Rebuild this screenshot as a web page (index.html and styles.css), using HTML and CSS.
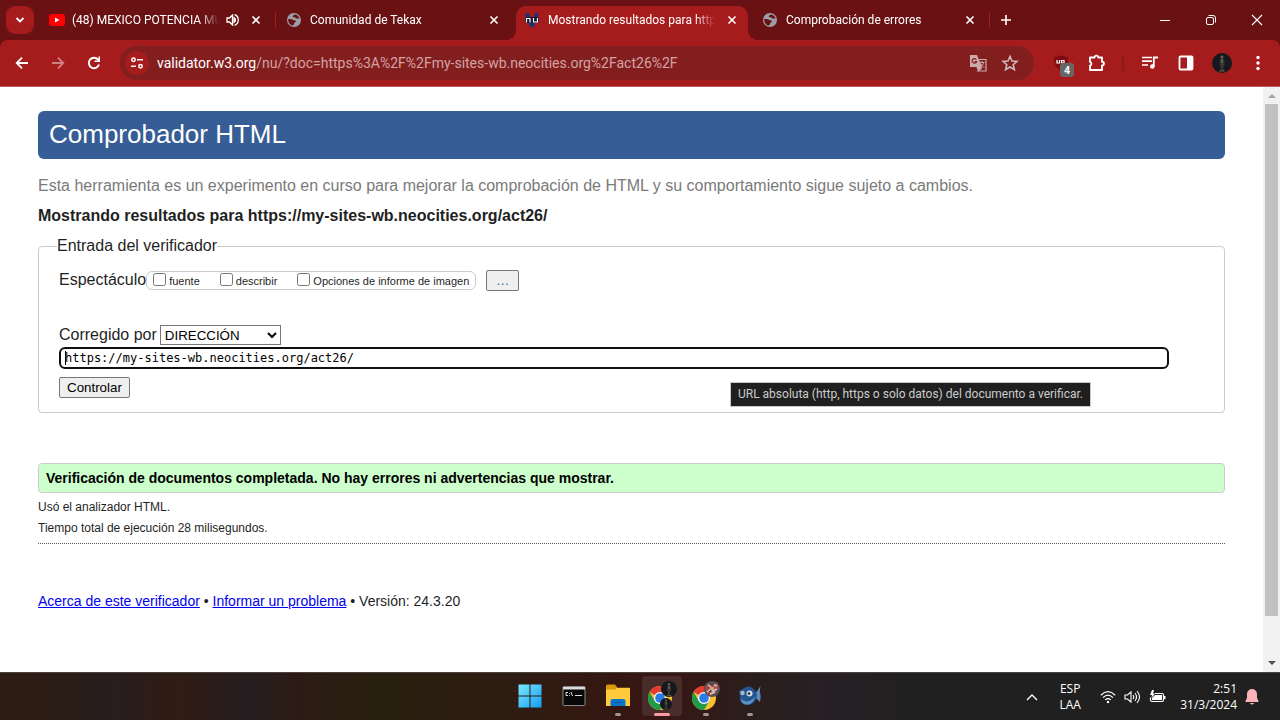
FILE: index.html
```html
<!DOCTYPE html>
<html lang="es">
<head>
<meta charset="utf-8">
<title>Mostrando resultados para https://my-sites-wb.neocities.org/act26/</title>
<link rel="stylesheet" href="styles.css">
</head>
<body>
<svg class="defs" width="0" height="0" aria-hidden="true">
  <defs>
    <symbol id="close" viewBox="0 0 10 10"><path d="M1.5 1.5l7 7M8.5 1.5l-7 7" fill="none" stroke="currentColor" stroke-width="1.6"/></symbol>
    <symbol id="globe" viewBox="0 0 14 14"><circle cx="7" cy="7" r="7" fill="#9aa0a6"/><path d="M1.2 6c1.800 0 3.800-.2 4.800.8.600.900 2.400.3 2.900 1.300.3 1-.9 1.300-1.500 1.900-.6.700-.4 1.700-1.400 2.600C3 12.200 1 9.500 1.200 6zM7.500 1.400C7 2.400 5.500 2.200 5.600 3.300c.2 1.200 2 .7 2.800 1.500.8.700 2.300.9 4.200.8C12 3.200 10 1.500 7.500 1.400z" fill="#6a1213"/></symbol>
    <symbol id="chrome" viewBox="0 0 24 24"><circle cx="12" cy="12" r="12" fill="#fbc02d"/><path d="M12 12L1.600 6A12 12 0 0 1 22.400 6H12z" fill="#e33b2e"/><path d="M1.600 6A12 12 0 0 0 12 24l5.200-9L12 12 6.800 15z" fill="#219a4b"/><circle cx="12" cy="12" r="6" fill="#fff"/><circle cx="12" cy="12" r="4.800" fill="#2a7de9"/></symbol>
    <symbol id="figure" viewBox="0 0 20 20"><circle cx="10" cy="10" r="10" fill="#15191d"/><circle cx="10" cy="4" r="1.500" fill="#765f50"/><path d="M8 6h4l.7 6-1.200 1v5H8.600v-5L7.400 12z" fill="#393530"/><path d="M10 6v4M7.500 18h2M10.500 18h2" stroke="#8b7b69"/></symbol>
  </defs>
</svg>

<header class="browser">
  <div class="tabstrip">
    <button class="tab-search" aria-label="Buscar pestañas"><svg width="10" height="8" viewBox="0 0 10 8"><path d="M1.500 2L5 5.500 8.500 2" fill="none" stroke="#fff" stroke-width="1.800"/></svg></button>
    <div class="tabs">
      <div class="tab">
        <svg class="favicon youtube" viewBox="0 0 16 12"><rect width="16" height="12" rx="3" fill="#f00"/><path d="M6 3.500v5L10.500 6z" fill="#fff"/></svg>
        <span class="tab-title">(48) MEXICO POTENCIA MU</span>
        <svg class="sound" width="13" height="12" viewBox="0 0 13 12"><path d="M1 4h2.500L6.500 1v10l-3-3H1z" fill="none" stroke="#fff" stroke-width="1.300"/><path d="M8 3.500c2 1 2 4 0 5zM8.500.7c5 1.500 5 9.100 0 10.600" fill="none" stroke="#fff" stroke-width="1.300"/></svg>
        <button class="tab-close" aria-label="Cerrar"><svg width="10" height="10"><use href="#close"/></svg></button>
      </div>
      <div class="tab divided">
        <svg class="favicon" viewBox="0 0 14 14"><use href="#globe"/></svg>
        <span class="tab-title">Comunidad de Tekax</span>
        <button class="tab-close" aria-label="Cerrar"><svg width="10" height="10"><use href="#close"/></svg></button>
      </div>
      <div class="tab active">
        <svg class="favicon" viewBox="0 0 14 14"><path d="M0 0h4l3 8 3-8h4L9 14H5z" fill="#27306f"/><rect y="4" width="14" height="6" rx="2" fill="#151331"/><path d="M1.500 9.500v-4h3.500v4M8.500 5v4h4V5" fill="none" stroke="#fff" stroke-width="1.200"/></svg>
        <span class="tab-title">Mostrando resultados para http</span>
        <button class="tab-close" aria-label="Cerrar"><svg width="10" height="10"><use href="#close"/></svg></button>
      </div>
      <div class="tab">
        <svg class="favicon" viewBox="0 0 14 14"><use href="#globe"/></svg>
        <span class="tab-title">Comprobación de errores</span>
        <button class="tab-close" aria-label="Cerrar"><svg width="10" height="10"><use href="#close"/></svg></button>
      </div>
      <button class="new-tab divided" aria-label="Nueva pestaña"><svg width="12" height="12" viewBox="0 0 12 12"><path d="M6 1v10M1 6h10" stroke="#fff" stroke-width="1.600"/></svg></button>
    </div>
    <div class="window-controls">
      <button aria-label="Minimizar"><svg width="12" height="12" viewBox="0 0 12 12"><path d="M1 6.500h10" stroke="#fff"/></svg></button>
      <button aria-label="Restaurar"><svg width="12" height="12" viewBox="0 0 12 12" fill="none" stroke="#fff"><rect x="1.500" y="3.500" width="7" height="7" rx="1.500"/><path d="M3.500 1.500H8a2.500 2.500 0 0 1 2.500 2.500v4.500"/></svg></button>
      <button aria-label="Cerrar ventana"><svg width="12" height="12" viewBox="0 0 12 12"><path d="M1 1l10 10M11 1L1 11" stroke="#fff" stroke-width="1.100"/></svg></button>
    </div>
  </div>

  <div class="toolbar">
    <button class="tool" aria-label="Atrás"><svg width="16" height="16" viewBox="0 0 16 16"><path d="M14 8H3M8 2.700L2.700 8 8 13.300" fill="none" stroke="#fff" stroke-width="1.800"/></svg></button>
    <button class="tool faded" aria-label="Adelante"><svg width="16" height="16" viewBox="0 0 16 16"><path d="M2 8h11M8 2.700L13.300 8 8 13.300" fill="none" stroke="#fff" stroke-width="1.800"/></svg></button>
    <button class="tool" aria-label="Recargar"><svg width="16" height="16" viewBox="0 0 16 16"><path d="M13 9.500A5.200 5.200 0 1 1 12 4.600L13 6" fill="none" stroke="#fff" stroke-width="1.900"/><path d="M14 1.500V7H8.500V5.400h3.900V1.500z" fill="#fff"/></svg></button>
    <div class="omnibox">
      <button class="site-info" aria-label="Información del sitio"><svg width="14" height="12" viewBox="0 0 14 12" fill="none" stroke="#fff" stroke-width="1.500"><circle cx="3.500" cy="2.800" r="1.700"/><path d="M7 2.800h6M1 9.200h5"/><circle cx="10.500" cy="9.200" r="1.700"/></svg></button>
      <div class="url"><span class="host">validator.w3.org</span>/nu/?doc=https%3A%2F%2Fmy-sites-wb.neocities.org%2Fact26%2F</div>
      <button class="inner-tool" aria-label="Traducir"><svg width="18" height="18" viewBox="0 0 18 18"><path d="M1 1h7l1.500 4H16v11H8.500L7.500 13H1z" fill="#c9a9a9"/><path d="M9.500 5.500l3 8.500-3.500 3h8V5.500z" fill="#831e1f" stroke="#c9a9a9" stroke-width="1.200"/><path d="M10.500 8.500h5M13 7v1.500M14.700 8.500c-.5 2-2 3.500-3.500 4.500M11.500 9.500c1 2 2.500 3 4 4" stroke="#c9a9a9" fill="none"/><path d="M7.300 5.500a2.300 2.300 0 1 0 .3 2.200H5.500" fill="none" stroke="#831e1f" stroke-width="1.200"/></svg></button>
      <button class="inner-tool" aria-label="Añadir a marcadores"><svg width="18" height="18" viewBox="0 0 18 18"><path d="M9 2.300l2 4.700 5 .4-3.800 3.300 1.200 5L9 13l-4.400 2.700 1.200-5L2 7.400 7 7z" fill="none" stroke="#d3b9b9" stroke-width="1.500"/></svg></button>
    </div>
    <div class="extensions">
      <button class="tool ublock" aria-label="uBlock"><svg width="16" height="16" viewBox="0 0 16 16"><path d="M8 0c2 1.500 4 1.800 7 2 0 7-1 10-7 14C2 12 1 9 1 2c3-.2 5-.5 7-2z" fill="#800b10"/><path d="M4 5v3h2.500V5M8.500 5v3H11V5.500H8.500" fill="none" stroke="#fff" stroke-width="1.200"/></svg><span class="count">4</span></button>
      <button class="tool" aria-label="Extensiones"><svg width="18" height="18" viewBox="0 0 18 18"><path d="M2 3.500h4.500a1.900 1.900 0 0 1 3.800 0H14v4.200a1.900 1.900 0 0 1 0 3.800V16H2v-4.400a2 2 0 0 0 0-3.800z" fill="none" stroke="#fff" stroke-width="1.900" stroke-linejoin="round"/></svg></button>
    </div>
    <div class="profile-tools">
      <button class="tool" aria-label="Multimedia"><svg width="18" height="16" viewBox="0 0 18 16"><path d="M1 2.500h10M1 6.200h10M1 10h6" stroke="#fff" stroke-width="1.700"/><path d="M12.800 11.500V2.500H17" fill="none" stroke="#fff" stroke-width="1.800"/><circle cx="11.300" cy="11.500" r="2.300" fill="#fff"/></svg></button>
      <button class="tool" aria-label="Panel lateral"><svg width="16" height="16" viewBox="0 0 16 16"><rect x="1.500" y="1.500" width="13" height="13" rx="1" fill="none" stroke="#fff" stroke-width="1.800"/><path d="M9 1h6v14H9z" fill="#fff"/></svg></button>
      <button class="tool" aria-label="Perfil"><svg width="20" height="20"><use href="#figure"/></svg></button>
      <button class="tool" aria-label="Menú"><svg width="4" height="16" viewBox="0 0 4 16" fill="#fff"><circle cx="2" cy="2.500" r="1.700"/><circle cx="2" cy="8" r="1.700"/><circle cx="2" cy="13.500" r="1.700"/></svg></button>
    </div>
  </div>
</header>

<div class="viewport">
  <main class="page">
    <h1 class="banner">Comprobador HTML</h1>
    <p class="intro">Esta herramienta es un experimento en curso para mejorar la comprobación de HTML y su comportamiento sigue sujeto a cambios.</p>
    <h2 class="results-title">Mostrando resultados para https://my-sites-wb.neocities.org/act26/</h2>
    <form>
      <fieldset class="checker">
        <legend>Entrada del verificador</legend>
        <div class="show-row">
          <span>Espectáculo</span>
          <div class="options">
            <label><input type="checkbox">fuente</label>
            <label><input type="checkbox">describir</label>
            <label><input type="checkbox">Opciones de informe de imagen</label>
          </div>
          <button type="button" class="push more">…</button>
        </div>
        <div class="source-row">
          <label for="method">Corregido por</label>
          <select id="method"><option>DIRECCIÓN</option></select>
        </div>
        <div class="address">
          <input type="text" aria-label="URL del documento" value="https://my-sites-wb.neocities.org/act26/">
          <span class="caret"></span>
          <div class="tooltip" role="tooltip">URL absoluta (http, https o solo datos) del documento a verificar.</div>
        </div>
        <button type="button" class="push">Controlar</button>
      </fieldset>
    </form>
    <p class="success">Verificación de documentos completada. No hay errores ni advertencias que mostrar.</p>
    <div class="details">
      <p>Usó el analizador HTML.</p>
      <p>Tiempo total de ejecución 28 milisegundos.</p>
    </div>
    <footer class="about"><a href="#acerca">Acerca de este verificador</a> • <a href="#informar">Informar un problema</a> • Versión: 24.3.20</footer>
  </main>
  <div class="scrollbar" aria-hidden="true">
    <svg width="17" height="17" viewBox="0 0 17 17"><path d="M5 11h8L9 7z" fill="#a3a3a3"/></svg>
    <div class="thumb"></div>
    <svg width="17" height="17" viewBox="0 0 17 17"><path d="M5 6h8l-4 4z" fill="#505050"/></svg>
  </div>
</div>

<div class="taskbar">
  <nav class="apps">
    <button aria-label="Inicio"><svg width="24" height="24" viewBox="0 0 24 24"><defs><linearGradient id="win" gradientUnits="userSpaceOnUse" x1="0" y1="0" x2="24" y2="24"><stop stop-color="#7ceafd"/><stop offset="1" stop-color="#129bf5"/></linearGradient></defs><path d="M.5.5h11v11H.5zM12.500.5h11v11h-11zM.5 12.500h11v11H.5zM12.500 12.500h11v11h-11z" fill="url(#win)"/></svg></button>
    <button aria-label="Símbolo del sistema"><svg width="24" height="20" viewBox="0 0 24 20"><rect x="1" y=".5" width="22" height="19" rx="1" fill="#080808" stroke="#85898c"/><path d="M1 1h22v2.500H1z" fill="#d8dadc"/><path d="M6 6.500H4v3h2M7.500 7v.8M7.500 9v.8M9 6l1.500 4M13 9.500h7" fill="none" stroke="#ddd"/></svg></button>
    <button class="running" aria-label="Explorador"><svg width="26" height="24" viewBox="0 0 26 24"><path d="M1 2q0-1.500 1.500-1.500H10l2 2.500v4H1z" fill="#d99a08"/><path d="M1 5.500h9l2-1.700h13V22H1z" fill="#ffcb3d"/><path d="M5.500 22v-5q0-2 2-2h11q2 0 2 2v5z" fill="#0875cb"/><path d="M9.500 18.500h7" stroke="#07559a"/></svg></button>
    <button class="running current" aria-label="Chrome"><svg width="30" height="30" viewBox="0 0 30 30"><use href="#chrome" x="1" y="5" width="24" height="24"/><use href="#figure" x="14" y="0" width="16" height="16"/><use href="#figure" x="13" y="17" width="12" height="12"/></svg></button>
    <button class="running" aria-label="Chrome, perfil 2"><svg width="30" height="30" viewBox="0 0 30 30"><use href="#chrome" x="1" y="5" width="24" height="24"/><circle cx="21" cy="8" r="8" fill="#4b5257"/><path d="M14 7l3-5 4 3 5-4 2 6-3 5-5 3-4-2z" fill="#a94740"/><path d="M17 4l3 2M23 4l3 1M16 11l4-3 2 2 4-2M19 13l5-2" stroke="#c8d0cd" stroke-width="1.500"/><path d="M19 6h4v3h-4z" fill="#d9a184"/></svg></button>
    <button class="running" aria-label="Bluefish"><svg width="24" height="24" viewBox="0 0 24 24"><path d="M16 10c3-1 4-5 6.500-8-.8 4-.8 6 0 9 .3 3 0 5-1 7-1.500-2-3-4-5.500-4z" fill="#5c8dbb"/><path d="M1 7L8 3c5-2 9 2 11 8-1 7-5 10-10 10-5-.5-8-4-7-9z" fill="#255692"/><path d="M3 15c5 4 9 3 14-2-1 5-5 8-9 7.500-3-.3-5-2.500-5-5.500z" fill="#5d92c8"/><circle cx="4.500" cy="9" r="2.200" fill="#a9b7c2"/><circle cx="11.500" cy="9.500" r="3" fill="#d5dce0"/><circle cx="11" cy="9.500" r="1.300" fill="#17283d"/></svg></button>
  </nav>
  <div class="tray">
    <button class="overflow" aria-label="Iconos ocultos"><svg width="12" height="8" viewBox="0 0 12 8"><path d="M1 7l5-5 5 5" fill="none" stroke="#fff" stroke-width="1.300"/></svg></button>
    <div class="language">ESP<br>LAA</div>
    <div class="status">
      <svg width="16" height="14" viewBox="0 0 16 14" fill="none" stroke="#fff" stroke-width="1.200"><path d="M.8 5.200q7.200-7 14.400 0M3 7.600q5-4.800 10 0M5.200 9.900q2.800-2.600 5.600 0"/><circle cx="8" cy="12" r="1.200" fill="#fff" stroke="none"/></svg>
      <svg width="17" height="14" viewBox="0 0 17 14" fill="none" stroke="#fff" stroke-width="1.100"><path d="M1 5h2.500L7 2v10L3.500 9H1zM9 5q1.500 2 0 4M11 3q3 4 0 8M13 1q5 6 0 12"/></svg>
      <svg width="17" height="14" viewBox="0 0 17 14"><path d="M6 3.500h7a1.500 1.500 0 0 1 1.500 1.500v5a1.500 1.500 0 0 1-1.500 1.500H3A1.500 1.500 0 0 1 1.500 10V7.500" fill="none" stroke="#fff" stroke-width="1.200"/><path d="M6 5h7v5H3V8zM15 6h1.500v3H15zM3 0L1 5h2L2.500 8 6 3.500H4L5 0z" fill="#fff"/></svg>
    </div>
    <div class="clock">2:51<br>31/3/2024</div>
    <svg class="bell" width="14" height="16" viewBox="0 0 14 16"><path d="M7 0a5 5 0 0 1 5 5v4l1.500 3v1H.5v-1L2 9V5a5 5 0 0 1 5-5zM4.800 14h4.400Q7 17 4.800 14z" fill="#ffb3b8"/></svg>
  </div>
</div>
</body>
</html>
```
FILE: styles.css
```css
* { box-sizing: border-box; }

body {
  margin: 0;
  height: 100vh;
  display: flex;
  flex-direction: column;
  overflow: hidden;
  font-family: "Liberation Sans", Arial, sans-serif;
  font-size: 16px;
  color: #1f1f1f;
  background: #fff;
}

svg { display: block; flex: none; }
.defs { position: absolute; }
h1, h2, p { margin: 0; }

/* Browser frame */
.browser {
  flex: none;
  font-family: Roboto, "Noto Sans", sans-serif;
  color: #fff;
  background: #6a1213;
}
.browser button, .taskbar button {
  display: flex;
  align-items: center;
  justify-content: center;
  padding: 0;
  border: 0;
  color: inherit;
  background: none;
}
.tabstrip {
  display: flex;
  height: 40px;
  padding-left: 6px;
}
.browser .tab-search {
  flex: none;
  width: 28px;
  height: 28px;
  margin: 6px 3px 0 0;
  border-radius: 9px;
  background: #a61c1d;
}
.tabs {
  flex: 1;
  display: flex;
  min-width: 0;
}
.tab {
  position: relative;
  flex: 0 1 238px;
  min-width: 0;
  display: flex;
  align-items: center;
  padding: 0 13px 0 12px;
  font-size: 12px;
}
.favicon { width: 14px; height: 14px; margin-right: 9px; }
.youtube { width: 16px; height: 12px; margin-right: 7px; }
.tab-title {
  flex: 1;
  min-width: 0;
  overflow: hidden;
  white-space: nowrap;
  -webkit-mask-image: linear-gradient(to left, transparent, #000 20px);
  mask-image: linear-gradient(to left, transparent, #000 20px);
}
.sound { margin-left: 7px; }
.tab-close { width: 12px; height: 16px; margin-left: 11px; }
.active { z-index: 1; }
.active::before {
  content: "";
  position: absolute;
  z-index: -1;
  inset: 6px 3px 0;
  border-radius: 10px 10px 0 0;
  background: #a61c1d;
}
.active::after {
  content: "";
  position: absolute;
  z-index: -1;
  left: -7px;
  right: -7px;
  bottom: 0;
  height: 10px;
  background:
    radial-gradient(circle at 0 0, transparent 10px, #a61c1d 10px) left / 10px 10px no-repeat,
    radial-gradient(circle at 100% 0, transparent 10px, #a61c1d 10px) right / 10px 10px no-repeat;
}
.divided::before {
  content: "";
  position: absolute;
  left: 0;
  top: 12px;
  width: 1px;
  height: 16px;
  background: #a61c1d;
}
.new-tab { position: relative; width: 34px; height: 40px; }
.window-controls { display: flex; }
.window-controls button { width: 46px; height: 40px; }

.toolbar {
  display: flex;
  align-items: center;
  height: 47px;
  padding: 0 4px;
  border-bottom: 1px solid #c15a5a;
  border-radius: 8px 8px 0 0;
  background: #a61c1d;
}
.tool { flex: none; width: 36px; height: 36px; }
.faded { opacity: .45; }
.omnibox {
  flex: 1;
  min-width: 0;
  display: flex;
  align-items: center;
  height: 34px;
  margin: 0 9px 0 8px;
  padding: 0 8px 0 5px;
  border-radius: 17px;
  background: #831e1f;
}
.browser .site-info {
  width: 24px;
  height: 24px;
  border-radius: 12px;
  background: #a61c1d;
}
.url {
  flex: 1;
  min-width: 0;
  margin-left: 8px;
  overflow: hidden;
  white-space: nowrap;
  font-size: 14px;
  color: #d3a3a3;
}
.host { color: #fff; }
.inner-tool { width: 32px; height: 32px; }
.extensions { display: flex; }
.ublock { position: relative; }
.count {
  position: absolute;
  right: 5px;
  bottom: 4px;
  width: 14px;
  height: 14px;
  border-radius: 3px;
  background: #666;
  font: bold 10px/14px "Open Sans", sans-serif;
  text-align: center;
}
.profile-tools { display: flex; align-items: center; }
.profile-tools::before {
  content: "";
  width: 2px;
  height: 16px;
  margin: 0 8px 0 7px;
  background: #831e1f;
}

/* Page */
.viewport { flex: 1; min-height: 0; display: flex; }
.page { flex: 1; min-width: 0; padding: 24px 38px 0; }
.banner {
  padding: 0 11px 2px;
  border-radius: 6px;
  font-size: 26px;
  font-weight: normal;
  line-height: 46px;
  color: #fff;
  background: #365d95;
}
.intro { margin-top: 17px; line-height: 20px; color: #7a7a7a; }
.results-title { margin-top: 10px; font-size: 16px; line-height: 20px; }
.checker {
  margin: 10px 0 0;
  padding: 13px 20px 14px;
  border: 1px solid #ccc;
  border-radius: 4px;
}
.checker legend { margin-left: -2px; padding: 0; line-height: 20px; }
.show-row { display: flex; align-items: center; height: 22px; }
.options {
  display: flex;
  align-items: center;
  gap: 20px;
  height: 19px;
  margin-right: 10px;
  padding: 0 6px;
  border: 1px solid #ccc;
  border-radius: 6px;
  font-size: 11px;
}
.options label { display: flex; align-items: flex-end; height: 17px; line-height: 15px; }
.options input { width: 13px; height: 13px; margin: 0 3px 3px 0; }
.push {
  height: 21px;
  padding: 0 7px;
  border: 1px solid #767676;
  border-radius: 2px;
  font-family: inherit;
  color: #000;
  background: #efefef;
}
.more { width: 33px; color: #2f6fb3; }
.source-row { display: flex; align-items: center; gap: 3px; margin-top: 34px; }
.source-row select {
  width: 121px;
  height: 20px;
  padding: 0;
  border: 1px solid #767676;
  border-radius: 0;
  font-family: inherit;
  color: #000;
  background: #fff;
}
.address { position: relative; margin: 2px 35px 8px 0; }
.address input {
  display: block;
  width: 100%;
  height: 22px;
  padding: 0 4px;
  border: 2px solid #101010;
  border-radius: 6px;
  outline: 0;
  font: 12px "DejaVu Sans Mono", monospace;
  color: #000;
}
.caret { position: absolute; left: 6px; top: 4px; width: 1px; height: 14px; background: #000; }
.tooltip {
  position: absolute;
  right: 78px;
  top: 35px;
  padding: 0 7px;
  border: 1px solid #c8c8c8;
  font: 12px/23px Roboto, "Noto Sans", sans-serif;
  white-space: nowrap;
  color: #ccc;
  background: #1f1f1f;
}
.success {
  margin-top: 50px;
  padding: 0 7px;
  border: 1px solid #ccc;
  border-radius: 4px;
  font-size: 14px;
  font-weight: bold;
  line-height: 28px;
  color: #000;
  background: #cfc;
}
.details {
  padding: 4px 0;
  border-bottom: 1px dotted #555;
  font-size: 12px;
  line-height: 21px;
}
.about { margin-top: 47px; font-size: 14px; line-height: 20px; }
.about a { color: #00e; }

.scrollbar { flex: none; display: flex; flex-direction: column; width: 17px; background: #f1f1f1; }
.thumb { flex: 0 0 87.5%; width: 13px; margin: 0 2px; background: #c1c1c1; }
.scrollbar svg:last-child { margin-top: auto; }

/* Taskbar */
.taskbar {
  flex: none;
  display: grid;
  grid-template-columns: 1fr auto 1fr;
  height: 48px;
  border-top: 1px solid #4a4340;
  font-family: "Open Sans", "Noto Sans", sans-serif;
  font-size: 12px;
  line-height: 16px;
  color: #fff;
  background: linear-gradient(90deg, #2e1c12 0, #2b1d17 5%, #271e1e 9%, #301c12 14%, #251e20 19%, #2c1b15 23%, #29200f 30%, #2e1c12 40%, #351712 48%, #381715 52%, #2a1e1c 59%, #272025 64%, #202020 72%);
}
.apps { grid-column: 2; display: flex; align-items: center; gap: 4px; padding-bottom: 1px; }
.taskbar .apps button { position: relative; width: 40px; height: 40px; border-radius: 4px; }
.taskbar .apps .current { background: #ffffff18; }
.running::after {
  content: "";
  position: absolute;
  left: 17px;
  bottom: 0;
  width: 6px;
  height: 3px;
  border-radius: 2px;
  background: #9d9695;
}
.current::after { left: 12px; width: 16px; background: #ff99a3; }
.tray { display: flex; align-items: center; justify-content: flex-end; padding-right: 21px; }
.language { width: 32px; margin: 0 14px 0 16px; text-align: center; }
.status { display: flex; gap: 8px; margin-right: 14px; }
.clock { text-align: right; }
.bell { margin-left: 8px; }
```
